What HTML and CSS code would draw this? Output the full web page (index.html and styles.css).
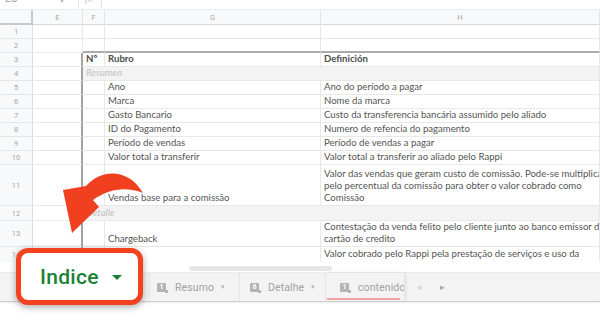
FILE: index.html
```html
<!DOCTYPE html>
<html>
<head>
<meta charset="utf-8">
<link rel="stylesheet" href="styles.css">
</head>
<body>
<div class="app">
  <div class="fbar">
    <span class="namebox">L5</span>
    <span class="nb-caret">▾</span>
    <span class="fsep"></span>
    <span class="fx">fx</span>
    <span class="fsep"></span>
  </div>

  <div class="sheet">
    <div class="corner"></div><div class="ch">E</div><div class="ch">F</div><div class="ch">G</div><div class="ch">H</div>

    <div class="rn">1</div><div class="c"></div><div class="c"></div><div class="c"></div><div class="c"></div>
    <div class="rn">2</div><div class="c"></div><div class="c tt"></div><div class="c tt"></div><div class="c tt"></div>

    <div class="rn">3</div><div class="c tl"></div><div class="c b">Nº</div><div class="c b">Rubro</div><div class="c b">Definición</div>
    <div class="rn">4</div><div class="c tl"></div><div class="c grey sec">Resumen</div>
    <div class="rn">5</div><div class="c tl"></div><div class="c"></div><div class="c">Ano</div><div class="c">Ano do período a pagar</div>
    <div class="rn">6</div><div class="c tl"></div><div class="c"></div><div class="c">Marca</div><div class="c">Nome da marca</div>
    <div class="rn">7</div><div class="c tl"></div><div class="c"></div><div class="c">Gasto Bancario</div><div class="c">Custo da transferencia bancária assumido pelo aliado</div>
    <div class="rn">8</div><div class="c tl"></div><div class="c"></div><div class="c">ID do Pagamento</div><div class="c">Numero de refencia do pagamento</div>
    <div class="rn">9</div><div class="c tl"></div><div class="c"></div><div class="c">Período de vendas</div><div class="c">Período de vendas a pagar</div>
    <div class="rn">10</div><div class="c tl"></div><div class="c"></div><div class="c">Valor total a transferir</div><div class="c">Valor total a transferir ao aliado pelo Rappi</div>
    <div class="rn">11</div><div class="c tl"></div><div class="c"></div><div class="c">Vendas base para a comissão</div><div class="c multi">Valor das vendas que geram custo de comissão. Pode-se multiplicar<br>pelo percentual da comissão para obter o valor cobrado como<br>Comissão</div>
    <div class="rn">12</div><div class="c tl"></div><div class="c grey sec">Detalle</div>
    <div class="rn">13</div><div class="c tl"></div><div class="c"></div><div class="c">Chargeback</div><div class="c multi">Contestação da venda felito pelo cliente junto ao banco emissor do<br>cartão de credito</div>
    <div class="rn">14</div><div class="c tl"></div><div class="c"></div><div class="c"></div><div class="c top">Valor cobrado pelo Rappi pela prestação de serviços e uso da</div>
  </div>

  <div class="hscroll"><div class="thumb"></div></div>

  <div class="tabbar">
    <div class="tabs-left"></div>
    <div class="tab t1">
      <span class="ticon">1</span><span class="tname">Resumo</span><span class="tcaret">▾</span>
    </div>
    <div class="tab t2">
      <span class="ticon">6</span><span class="tname">Detalhe</span><span class="tcaret">▾</span>
    </div>
    <div class="tab active">
      <span class="ticon">1</span><span class="tname">contenido</span>
    </div>
    <div class="tnav">
      <span class="navl">◂</span><span class="navr">▸</span>
    </div>
  </div>

  <svg class="arrow" width="100" height="90" viewBox="55 160 100 90">
    <path d="M143 193 C131 171 104 166 86 186 L63 190 L72 233 L99 207 L93 200 C108 189 126 186 143 193 Z" fill="#f0401f"/>
  </svg>

  <div class="callout">
    <span class="ctext">Indice</span>
    <span class="ctri"></span>
  </div>
</div>
</body>
</html>
```

FILE: styles.css
```css
* { box-sizing: border-box; }
html, body { margin: 0; padding: 0; background: #fff; }
.app {
  position: relative;
  width: 600px;
  height: 325px;
  overflow: hidden;
  font-family: Lato, "Open Sans", sans-serif;
}
.fbar {
  height: 10px;
  display: flex;
  align-items: flex-end;
  overflow: hidden;
  border-bottom: 1px solid #ececec;
}
.namebox {
  width: 60px;
  padding-left: 5px;
  font: 11px/11px Roboto, sans-serif;
  color: #9a9a9a;
  margin-bottom: 5px;
}
.nb-caret {
  width: 18px;
  font: 8px/8px Roboto, sans-serif;
  color: #b0b0b0;
  margin-bottom: 4px;
}
.fsep {
  width: 1px;
  height: 10px;
  background: #e4e4e4;
}
.fx {
  width: 22px;
  padding-left: 6px;
  font: italic 11px/11px "Liberation Serif", serif;
  color: #c8c8c8;
  margin-bottom: 5px;
}
.sheet {
  display: grid;
  grid-template-columns: 33px 50px 22px 216px 279px;
  grid-template-rows: 15px repeat(10, 14px) 41px 15px 26px 16px;
  height: 252px;
  overflow: hidden;
}
.corner {
  background: #f8f9fa;
  border-right: 2px solid #c8c8c8;
  border-bottom: 2px solid #c8c8c8;
}
.ch {
  background: #f8f9fa;
  border-right: 1px solid #e3e3e3;
  border-bottom: 1px solid #d8d8d8;
  font: 7.5px/15px Roboto, sans-serif;
  color: #a6a6a6;
  text-align: center;
}
.rn {
  background: #f8f9fa;
  border-right: 1px solid #dedede;
  border-bottom: 1px solid #e6e6e6;
  font: 7.5px Roboto, sans-serif;
  color: #a6a6a6;
  display: flex;
  align-items: center;
  justify-content: center;
}
.c {
  border-right: 1px solid #e8e8e8;
  border-bottom: 1px solid #e8e8e8;
  display: flex;
  align-items: flex-end;
  padding: 0 3px 1px;
  font-size: 9.6px;
  line-height: 12px;
  color: #555;
  white-space: nowrap;
  overflow: hidden;
}
.c.tt { border-bottom: 2px solid #ababab; }
.c.tl { border-right: 2px solid #a3a3a3; }
.c.b { font-weight: 700; color: #4d4d4d; }
.c.grey { background: #f3f3f3; grid-column: span 3; }
.c.sec { font-style: italic; color: #c2c2c2; }
.c.top { align-items: flex-start; padding-top: 1px; }

.hscroll {
  height: 10px;
  padding-top: 4px;
  padding-left: 189px;
}
.thumb {
  width: 143px;
  height: 5px;
  border-radius: 3px;
  background: #e6e6e6;
}
.tabbar {
  height: 30px;
  background: #f3f3f3;
  border-top: 1px solid #ececec;
  border-bottom: 1px solid #cfcfcf;
  display: flex;
  align-items: stretch;
  font-family: Roboto, sans-serif;
  box-shadow: 0 1px 2px rgba(0,0,0,0.08);
}
.tabs-left {
  width: 150px;
  border-right: 1px solid #e4e4e4;
}
.tab {
  display: flex;
  align-items: center;
  border-right: 1px solid #e6e6e6;
  position: relative;
  flex: none;
}
.tab.t1 { width: 90px; padding-left: 7px; }
.tab.t2 { width: 86px; padding-left: 10px; }
.ticon {
  width: 9px;
  height: 9px;
  background: #b4b4b4;
  color: #fff;
  font: bold 7px/9px Roboto, sans-serif;
  text-align: center;
  margin-right: 9px;
  border-radius: 1px;
  position: relative;
  margin-top: 1px;
  flex: none;
}
.ticon::after {
  content: "";
  position: absolute;
  right: -2px;
  bottom: -1px;
  width: 3px;
  height: 3px;
  background: #b4b4b4;
}
.tname {
  font-size: 10.5px;
  color: #a2a2a2;
  letter-spacing: 0.1px;
}
.tcaret {
  font-size: 7px;
  color: #b4b4b4;
  margin-left: 7px;
}
.tab.active {
  width: 78px;
  padding-left: 14px;
  overflow: hidden;
  border-right: none;
  box-shadow: 2px 0 3px rgba(0,0,0,0.08);
}
.tab.active::after {
  content: "";
  position: absolute;
  left: 1px;
  right: 4px;
  bottom: 1px;
  height: 2px;
  background: #f3a3a3;
}
.tnav {
  display: flex;
  align-items: center;
  padding-left: 13px;
  gap: 18px;
  font-size: 9px;
}
.navl { color: #d4d4d4; }
.navr { color: #a8a8a8; }

.arrow {
  position: absolute;
  left: 55px;
  top: 160px;
}
.callout {
  position: absolute;
  left: 16px;
  top: 248px;
  width: 127px;
  height: 57px;
  border: 5px solid #f4411f;
  border-radius: 12px;
  background: #fff;
  box-shadow: 0 2px 7px rgba(0,0,0,0.35);
  display: flex;
  align-items: center;
  padding-left: 19px;
}
.ctext {
  font: 500 21px/1 Roboto, sans-serif;
  color: #1b7f35;
  letter-spacing: 0.3px;
  margin-top: 1px;
}
.ctri {
  width: 0;
  height: 0;
  border-left: 5.5px solid transparent;
  border-right: 5.5px solid transparent;
  border-top: 5px solid #1b7f35;
  margin-left: 13px;
  margin-top: 1px;
}
```
